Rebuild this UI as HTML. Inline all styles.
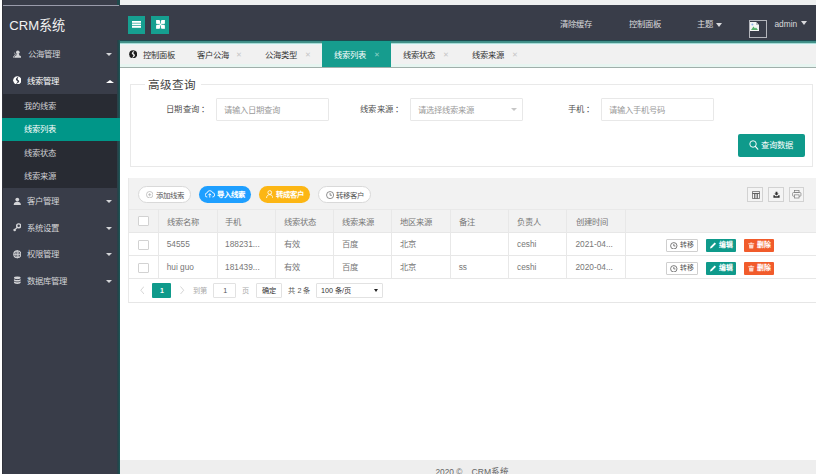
<!DOCTYPE html>
<html lang="zh-CN">
<head>
<meta charset="utf-8">
<title>CRM系统</title>
<style>
*{box-sizing:border-box;margin:0;padding:0}
html{width:816px;height:474px;overflow:hidden;background:#fff}
body{width:816px;height:474px;background:#fff}
body{position:relative;font-family:"Liberation Sans",sans-serif;font-size:8.4px;color:#555;line-height:1}
.abs{position:absolute}
/* ---------- sidebar ---------- */
#side{position:absolute;left:2px;top:0;width:118px;height:474px;background:#393d49;box-shadow:0 -4px 0 #393d49,0 4px 0 #393d49}
#side .edge{position:absolute;right:0;top:40px;width:3px;height:434px;background:linear-gradient(to right,#2e3d47,#21494d,#1c5a58);z-index:1}
#side .edge2{position:absolute;right:0;top:0;width:3px;height:5px;background:#1f4a4c}
#side .ledge{position:absolute;left:0;top:0;width:1px;height:474px;background:#30323b}
#side .topline{position:absolute;left:0;top:5px;width:117px;height:1px;background:#9a9cab}
#logo{position:absolute;left:7.3px;top:18.6px;font-size:13.1px;color:#f2f2f2;white-space:nowrap}
.nav{position:absolute;left:0;width:118px;height:26.5px;color:#d4d5d8}
.nav .ic{position:absolute;left:10.6px;top:8.6px;width:8.6px;height:8.6px}
.nav .tx{position:absolute;left:25.2px;top:9.1px;font-size:8.35px;white-space:nowrap}
.nav .ar{position:absolute;left:104px;top:12px;width:0;height:0;border-left:3.2px solid transparent;border-right:3.2px solid transparent;border-top:3.6px solid #d4d5d8}
.nav .ar.up{border-top:none;border-bottom:3.9px solid #fff;border-left-width:4.1px;border-right-width:4.1px;left:103.6px;top:12.3px}
#child{position:absolute;left:0;top:94px;width:118px;height:94.4px;background:#282b33}
.sub{position:absolute;left:0;width:118px;height:23.6px;color:#cfd0d3}
.sub span{position:absolute;left:22px;top:7.6px;font-size:8.3px;white-space:nowrap}
.sub.on{background:#009688;color:#fff;z-index:2}
/* ---------- header ---------- */
#topstrip{position:absolute;left:120px;top:0;width:696px;height:5px;background:#eef0f0;box-shadow:0 -4px 0 #eef0f0,4px 0 0 #eef0f0,4px -4px 0 #eef0f0}
#header{position:absolute;left:120px;top:5px;width:696px;height:36px;background:#393d49;box-shadow:4px 0 0 #393d49}
#tealline{position:absolute;left:120px;top:40px;width:696px;height:3px;background:linear-gradient(#1d4b50 0,#1d4b50 1px,#3f8d87 1px,#3f8d87 2px,#449189 2px,#449189 3px)}
.hbtn{position:absolute;top:11px;width:17.5px;height:18px;background:#169f90}
.hlink{position:absolute;top:15.4px;font-size:8.4px;color:#d9dadd;white-space:nowrap}
.caret{position:absolute;width:0;height:0;border-left:3.7px solid transparent;border-right:3.7px solid transparent;border-top:4px solid #d9dadd}
/* ---------- tabs ---------- */
#tabs{position:absolute;left:120px;top:43px;width:696px;height:25px;background:linear-gradient(#a9ddd8 0,#a9ddd8 1px,#e9f6f9 1px,#e9f6f9 2px,#f1f1f1 2px,#f1f1f1 21px,#e7f5f1 21px,#e7f5f1 24px);border-bottom:1px solid #a0afaa}
.tab{position:absolute;top:0;height:24px;font-size:8.3px;color:#333;white-space:nowrap}
.tab .t{position:absolute;top:7.8px}
.tab .x{position:absolute;top:8.4px;font-size:7px;color:#c6c6c6}
.tab.on{background:#169c8e;color:#fff}
.tab.on .x{color:#8fd0c8}
/* ---------- search ---------- */
#fs{position:absolute;left:130px;top:84px;width:683px;height:82.5px;border:1px solid #e9e9e9}
#legend{position:absolute;left:144.5px;top:77px;width:56px;height:15px;background:#fff;font-size:11.6px;color:#444;padding:1.9px 0 0 3.6px;white-space:nowrap}
.lbl i{font-style:normal;margin-left:1.5px}
.lbl{position:absolute;top:105px;font-size:8.3px;color:#505050;white-space:nowrap;letter-spacing:0.45px}
.inp{position:absolute;top:98px;width:112.5px;height:22.6px;border:1px solid #e8e8e8;border-radius:1px;background:#fff;font-size:8.3px;color:#9a9a9a;padding:7.2px 0 0 6.5px;white-space:nowrap}
#qbtn{position:absolute;left:738px;top:134px;width:67px;height:22.6px;background:#0f9a8b;border-radius:2px;color:#fff;font-size:8.3px}
/* ---------- table ---------- */
#tbl{position:absolute;left:128px;top:178px;width:688px;height:125px;background:#fff;border-left:1px solid #e9e9e9;border-bottom:1px solid #e6e6e6}
#tool{position:absolute;left:0;top:0;width:688px;height:31px;background:#f2f2f2}
.pill{position:absolute;top:8px;height:17.4px;border-radius:8.7px;font-size:7.4px;white-space:nowrap;color:#fff}
.pill.w{background:#fff;border:1px solid #d9d9d9;color:#555}
.pill span{position:absolute;top:4.8px}
.tic{position:absolute;top:8.8px;width:15.4px;height:15px;border:1px solid #d2d2d2;background:#f4f4f4}
#thead{position:absolute;left:0;top:31px;width:688px;height:24px;background:#f2f2f2;border-bottom:1px solid #e7e7e7;border-top:1px solid #e9e9e9}
.row{position:absolute;left:0;width:688px;height:23px;border-bottom:1px solid #e7e7e7;border-right:1px solid #e9e9e9;background:#fff}
.c{position:absolute;top:7.4px;font-size:8.3px;color:#777;white-space:nowrap}
#thead .c{color:#777;top:7.5px}
#thead .cb{top:5.6px}
.v{position:absolute;top:31px;width:1px;height:70px;background:#e8e8e8}
.cb{position:absolute;left:9.2px;top:6.6px;width:10.6px;height:10.6px;border:1px solid #d2d2d2;border-radius:1px;background:#fff}
.ob{position:absolute;top:6px;height:13.2px;font-size:6.9px;border-radius:1px;color:#fff;white-space:nowrap}
.ob span{position:absolute;top:3.3px}
.ob.w{background:#fff;border:1px solid #cfcfcf;color:#555}
.ob.g{background:#0f9a8b}
.ob.r{background:#f15b2b}
/* ---------- pager ---------- */
.pg{position:absolute;font-size:7.2px;color:#555;white-space:nowrap}
.pbox{position:absolute;top:104.6px;height:15.4px;border:1px solid #e2e2e2;background:#fff;border-radius:1px}
/* ---------- footer ---------- */
#foot{position:absolute;left:120px;top:460px;width:696px;height:14px;background:#eeeeee;box-shadow:0 4px 0 #eee,4px 0 0 #eee,4px 4px 0 #eee}
#foot span{position:absolute;top:8.1px;font-size:8.3px;color:#666;white-space:pre}
</style>
</head>
<body>

<!-- ================= SIDEBAR ================= -->
<div id="side">
  <div class="topline"></div>
  <div id="logo">CRM系统</div>

  <div class="nav" style="top:41px">
    <svg class="ic" viewBox="0 0 10 10"><circle cx="5.6" cy="2.600" r="2.100" fill="#d4d5d8"/><path d="M4.300 4.200h2.600l.5 2.300c1.500.3 2.300 1 2.300 2.600H1.500c0-1.600.8-2.300 2.300-2.600z" fill="#d4d5d8"/><path d="M.3 9.100c0-1.500.6-2.300 1.900-2.700l.6-1.600c-.6-.4-.9-1-.9-1.700" fill="none" stroke="#d4d5d8" stroke-width=".9"/></svg>
    <span class="tx" style="left:25.800px">公海管理</span><i class="ar"></i>
  </div>
  <div class="nav" style="top:67.5px;color:#fff">
    <svg class="ic" style="top:8.300px" viewBox="0 0 10 10"><circle cx="5" cy="5" r="4.800" fill="#fff"/><path d="M6.700 .700C4.800 1.500 3 3 3.400 4.300c.3 1 2 1 1.900 2.200-.1 1-1.200 2-2.200 2.700 1.900-.2 3.900-1.500 4.100-3 .2-1.400-1.700-1.500-1.800-2.500-.1-1 .7-2.200 1.300-3z" fill="#393d49"/></svg>
    <span class="tx" style="left:24.600px;top:9px">线索管理</span><i class="ar up"></i>
  </div>
  <div id="child">
    <div class="sub" style="top:0"><span>我的线索</span></div>
    <div class="sub on" style="top:23.6px"><span>线索列表</span></div>
    <div class="sub" style="top:47.2px"><span>线索状态</span></div>
    <div class="sub" style="top:70.8px"><span>线索来源</span></div>
  </div>
  <div class="nav" style="top:188.4px">
    <svg class="ic" viewBox="0 0 10 10"><circle cx="5" cy="3" r="2.200" fill="#d4d5d8"/><path d="M0.8 9.300c0-2.800 1.800-3.800 4.200-3.800s4.200 1 4.200 3.800z" fill="#d4d5d8"/></svg>
    <span class="tx">客户管理</span><i class="ar"></i>
  </div>
  <div class="nav" style="top:214.9px">
    <svg class="ic" viewBox="0 0 10 10"><circle cx="6.600" cy="3.300" r="2.300" fill="none" stroke="#d4d5d8" stroke-width="1.700"/><path d="M4.700 5.300L2.600 7.400" stroke="#d4d5d8" stroke-width="1.500"/><circle cx="1.900" cy="8.100" r="1.500" fill="#d4d5d8"/></svg>
    <span class="tx">系统设置</span><i class="ar"></i>
  </div>
  <div class="nav" style="top:241.400px">
    <svg class="ic" viewBox="0 0 10 10"><circle cx="5" cy="5" r="4.1" fill="none" stroke="#d4d5d8" stroke-width="1.200"/><path d="M5 .9v8.200M.9 5h8.200" stroke="#d4d5d8" stroke-width="1.100"/><ellipse cx="5" cy="5" rx="1.900" ry="4.100" fill="none" stroke="#d4d5d8" stroke-width=".9"/></svg>
    <span class="tx">权限管理</span><i class="ar"></i>
  </div>
  <div class="nav" style="top:267.9px">
    <svg class="ic" viewBox="0 0 10 10"><ellipse cx="5" cy="2.100" rx="3.900" ry="1.600" fill="#d4d5d8"/><path d="M1.100 3.400c.6.800 2.200 1.200 3.900 1.200s3.300-.4 3.900-1.200v1.500c0 .9-1.700 1.600-3.900 1.600S1.100 5.800 1.100 4.900zM1.100 6.200c.6.800 2.200 1.200 3.900 1.200s3.300-.4 3.900-1.200v1.500c0 .9-1.700 1.600-3.900 1.600S1.100 8.600 1.100 7.700z" fill="#d4d5d8"/></svg>
    <span class="tx">数据库管理</span><i class="ar"></i>
  </div>

  <div class="ledge"></div>
  <div class="edge"></div><div class="edge2"></div>
</div>

<!-- ================= HEADER ================= -->
<div id="topstrip"></div>
<div id="header">
  <div class="hbtn" style="left:8px;width:17px">
    <svg class="abs" style="left:4px;top:4.800px" width="9" height="6.800" viewBox="0 0 9 6.800"><rect x="0" y="0" width="9" height="1.800" fill="#fff"/><rect x="0" y="2.500" width="9" height="1.800" fill="#fff"/><rect x="0" y="5" width="9" height="1.800" fill="#fff"/></svg>
  </div>
  <div class="hbtn" style="left:31px;width:18px">
    <svg class="abs" style="left:4.500px;top:3.800px" width="9" height="8.800" viewBox="0 0 9 9"><rect x="0" y="0" width="9" height="9" fill="#fff"/><path d="M4.500 0v9M0 4.500h9" stroke="#169f90" stroke-width=".8"/><path d="M3.300 0h2.400L4.500 1.600zM3.300 9h2.400L4.500 7.400zM0 3.500v2L1.300 4.500zM9 3.500v2L7.700 4.500z" fill="#169f90"/><circle cx="4.500" cy="4.500" r="1" fill="#fff"/></svg>
  </div>
  <span class="hlink" style="left:439.500px">清除缓存</span>
  <span class="hlink" style="left:508.500px">控制面板</span>
  <span class="hlink" style="left:576.500px">主题</span>
  <i class="caret" style="left:596.200px;top:17.800px"></i>
  <div class="abs" style="left:628.700px;top:15.300px;width:18px;height:17.700px;border:1px solid #b4b6bc">
    <svg class="abs" style="left:0.500px;top:0.500px" width="9" height="9" viewBox="0 0 9 9"><path d="M0 0h6l3 3v6H0z" fill="#f4f6f4"/><path d="M6 0v3h3z" fill="#b9bdc0"/><path d="M1 8l2.500-3.500L5 6.500 6 5.500 8 8z" fill="#56b36a"/><circle cx="2.400" cy="2.600" r="1" fill="#8fb4e8"/></svg>
  </div>
  <span class="hlink" style="left:654.400px">admin</span>
  <i class="caret" style="left:681.300px;top:16px"></i>
</div>
<div id="tealline"></div>

<!-- ================= TABS ================= -->
<div id="tabs">
  <div class="tab" style="left:0;width:65px">
    <svg class="abs" style="left:8.900px;top:6.800px" width="8.300" height="8.600" viewBox="0 0 10 10"><circle cx="5" cy="5" r="4.800" fill="#1e1e1e"/><path d="M6.700 .700C4.800 1.500 3 3 3.400 4.300c.3 1 2 1 1.900 2.200-.1 1-1.200 2-2.200 2.700 1.900-.2 3.900-1.500 4.100-3 .2-1.400-1.700-1.500-1.800-2.500-.1-1 .7-2.200 1.300-3z" fill="#f1f1f1"/></svg>
    <span class="t" style="left:22.700px">控制面板</span>
  </div>
  <div class="tab" style="left:65px;width:69px"><span class="t" style="left:11.700px">客户公海</span><span class="x" style="left:50.600px">✕</span></div>
  <div class="tab" style="left:134px;width:68.500px"><span class="t" style="left:11.400px">公海类型</span><span class="x" style="left:50.500px">✕</span></div>
  <div class="tab on" style="left:201.800px;top:-2px;height:26px;width:69.200px"><span class="t" style="left:11.900px;top:9.800px">线索列表</span><span class="x" style="left:52px;top:10.400px">✕</span></div>
  <div class="tab" style="left:271.200px;width:69px"><span class="t" style="left:11.800px">线索状态</span><span class="x" style="left:51.800px">✕</span></div>
  <div class="tab" style="left:340.200px;width:69px"><span class="t" style="left:11.800px">线索来源</span><span class="x" style="left:51.800px">✕</span></div>
</div>

<!-- ================= SEARCH ================= -->
<div id="fs"></div>
<div id="legend">高级查询</div>
<span class="lbl" style="left:165.800px">日期查询<i>：</i></span>
<div class="inp" style="left:216px">请输入日期查询</div>
<span class="lbl" style="left:360px">线索来源<i>：</i></span>
<div class="inp" style="left:410.400px">请选择线索来源<i class="caret" style="left:99.500px;top:9px;border-top-color:#c6c6c6;border-left-width:3.300px;border-right-width:3.300px;border-top-width:3.600px"></i></div>
<span class="lbl" style="left:568px">手机<i>：</i></span>
<div class="inp" style="left:601px">请输入手机号码</div>
<div id="qbtn">
  <svg class="abs" style="left:11px;top:6.400px" width="9.600" height="10" viewBox="0 0 10 10.500"><circle cx="4.200" cy="4.200" r="3.400" fill="none" stroke="#fff" stroke-width="1"/><path d="M6.600 6.800l2.600 2.900" stroke="#fff" stroke-width="1.200" stroke-linecap="round"/></svg>
  <span class="abs" style="left:23px;top:7.400px;white-space:nowrap">查询数据</span>
</div>

<!-- ================= TABLE ================= -->
<div id="tbl">
  <div id="tool">
    <div class="pill w" style="left:8.500px;width:53.500px">
      <svg class="abs" style="left:7.300px;top:3.900px" width="7.400" height="7.400" viewBox="0 0 8 8"><circle cx="4" cy="4" r="3.500" fill="none" stroke="#aaa" stroke-width=".7"/><path d="M4 2.300v3.400M2.300 4h3.400" stroke="#aaa" stroke-width=".7"/></svg>
      <span style="left:17.200px">添加线索</span></div>
    <div class="pill" style="left:70px;width:51.600px;background:#1e9fff">
      <svg class="abs" style="left:6px;top:4.400px" width="9.500" height="8" viewBox="0 0 9.500 8"><path d="M2.300 7a2 2 0 0 1-.3-4A2.900 2.900 0 0 1 7.600 2.700 2.150 2.150 0 0 1 7.400 7" fill="none" stroke="#fff" stroke-width=".9"/><path d="M4.800 7.600V3.800M3.400 5.200l1.400-1.500 1.400 1.500" fill="none" stroke="#fff" stroke-width=".9"/></svg>
      <span style="left:17.600px;font-weight:bold">导入线索</span></div>
    <div class="pill" style="left:129.600px;width:51.400px;background:#fcb614">
      <svg class="abs" style="left:7.300px;top:4.300px" width="7.500" height="8.400" viewBox="0 0 8 9"><circle cx="4" cy="2.700" r="2" fill="none" stroke="#fff" stroke-width=".9"/><path d="M.6 8.600c0-2.300 1.400-3.600 3.400-3.600s3.400 1.300 3.400 3.600" fill="none" stroke="#fff" stroke-width=".9"/></svg>
      <span style="left:17.200px;font-weight:bold">转成客户</span></div>
    <div class="pill w" style="left:189.300px;width:52.800px">
      <svg class="abs" style="left:7px;top:4px" width="8.200" height="8.200" viewBox="0 0 9 9"><circle cx="4.500" cy="4.500" r="3.900" fill="none" stroke="#666" stroke-width=".8"/><path d="M4.500 2.200v2.500h2" fill="none" stroke="#666" stroke-width=".8"/></svg>
      <span style="left:17px">转移客户</span></div>

    <div class="tic" style="left:618.300px"><svg class="abs" style="left:3.400px;top:3.200px" width="8" height="8" viewBox="0 0 9 9"><path d="M.5.500h8v2.300h-8zM.5 2.800h2.600v5.700H.5zM3.100 2.800h2.800v5.700H3.100zM5.900 2.800h2.600v5.700H5.900z" fill="none" stroke="#555" stroke-width=".8"/></svg></div>
    <div class="tic" style="left:639.300px"><svg class="abs" style="left:3.600px;top:3.600px" width="7" height="7.200" viewBox="0 0 9 9"><path d="M3.300.8h2.400v2.400h1.600L4.500 5.600 1.700 3.200h1.600z" fill="#333"/><path d="M.5 5.500h1.600l.9 1h3l.9-1h1.600v3h-8z" fill="#333"/></svg></div>
    <div class="tic" style="left:660px"><svg class="abs" style="left:2.200px;top:2.400px" width="9.500" height="8.800" viewBox="0 0 10 9"><rect x="2.600" y=".5" width="4.800" height="2" fill="none" stroke="#777" stroke-width=".7"/><rect x=".6" y="2.500" width="8.800" height="4" rx="1" fill="none" stroke="#777" stroke-width=".7"/><rect x="2.600" y="5" width="4.800" height="3.300" fill="#f7f7f7" stroke="#777" stroke-width=".7"/></svg></div>
  </div>

  <div id="thead">
    <div class="cb"></div>
    <span class="c" style="left:37.7px">线索名称</span>
    <span class="c" style="left:96.1px">手机</span>
    <span class="c" style="left:154.5px">线索状态</span>
    <span class="c" style="left:212.9px">线索来源</span>
    <span class="c" style="left:271.3px">地区来源</span>
    <span class="c" style="left:329.7px">备注</span>
    <span class="c" style="left:388.1px">负责人</span>
    <span class="c" style="left:446.5px">创建时间</span>
  </div>
  <div class="row" style="top:55px">
    <div class="cb"></div>
    <span class="c" style="left:37.7px">54555</span>
    <span class="c" style="left:96.1px">188231...</span>
    <span class="c" style="left:154.5px">有效</span>
    <span class="c" style="left:212.9px">百度</span>
    <span class="c" style="left:271.3px">北京</span>
    <span class="c" style="left:388.1px">ceshi</span>
    <span class="c" style="left:446.5px">2021-04...</span>
    <div class="ob w" style="left:537px;width:31.600px"><svg class="abs" style="left:3.300px;top:1.700px" width="7.600" height="7.600" viewBox="0 0 9 9"><circle cx="4.500" cy="4.500" r="3.800" fill="none" stroke="#555" stroke-width=".9"/><path d="M4.500 2.300v2.400h1.900" fill="none" stroke="#555" stroke-width=".9"/></svg><span style="left:12.600px;top:2.300px">转移</span></div>
    <div class="ob g" style="left:577px;width:30.200px"><svg class="abs" style="left:4px;top:3.300px" width="6.500" height="6.500" viewBox="0 0 7 7"><path d="M0 7l.5-2L5 .5 6.500 2 2 6.500z" fill="#fff"/></svg><span style="left:12.500px;font-weight:bold">编辑</span></div>
    <div class="ob r" style="left:615px;width:30.200px"><svg class="abs" style="left:4px;top:3.200px" width="6.500" height="6.800" viewBox="0 0 7 7"><path d="M.3 1.300h6.400v1H.3zM2.500.3h2v1h-2zM1 2.800h5l-.4 4H1.400z" fill="#ffd9cc"/></svg><span style="left:12.500px;font-weight:bold">删除</span></div>
  </div>
  <div class="row" style="top:78px">
    <div class="cb"></div>
    <span class="c" style="left:37.7px">hui guo</span>
    <span class="c" style="left:96.1px">181439...</span>
    <span class="c" style="left:154.5px">有效</span>
    <span class="c" style="left:212.9px">百度</span>
    <span class="c" style="left:271.3px">北京</span>
    <span class="c" style="left:329.7px">ss</span>
    <span class="c" style="left:388.1px">ceshi</span>
    <span class="c" style="left:446.5px">2020-04...</span>
    <div class="ob w" style="left:537px;width:31.600px"><svg class="abs" style="left:3.300px;top:1.700px" width="7.600" height="7.600" viewBox="0 0 9 9"><circle cx="4.500" cy="4.500" r="3.800" fill="none" stroke="#555" stroke-width=".9"/><path d="M4.500 2.300v2.400h1.900" fill="none" stroke="#555" stroke-width=".9"/></svg><span style="left:12.600px;top:2.300px">转移</span></div>
    <div class="ob g" style="left:577px;width:30.200px"><svg class="abs" style="left:4px;top:3.300px" width="6.500" height="6.500" viewBox="0 0 7 7"><path d="M0 7l.5-2L5 .5 6.500 2 2 6.500z" fill="#fff"/></svg><span style="left:12.500px;font-weight:bold">编辑</span></div>
    <div class="ob r" style="left:615px;width:30.200px"><svg class="abs" style="left:4px;top:3.200px" width="6.500" height="6.800" viewBox="0 0 7 7"><path d="M.3 1.300h6.400v1H.3zM2.500.3h2v1h-2zM1 2.800h5l-.4 4H1.400z" fill="#ffd9cc"/></svg><span style="left:12.500px;font-weight:bold">删除</span></div>
  </div>

  <!-- column separators -->
  <i class="v" style="left:29.4px"></i><i class="v" style="left:87.8px"></i><i class="v" style="left:146.2px"></i><i class="v" style="left:204.4px"></i><i class="v" style="left:262.4px"></i><i class="v" style="left:321.4px"></i><i class="v" style="left:379.4px"></i><i class="v" style="left:437.4px"></i><i class="v" style="left:496px"></i>

  <!-- pager -->
  <svg class="abs" style="left:10.600px;top:108.300px" width="4.500" height="8.500" viewBox="0 0 4.500 8.500"><path d="M4 .5L.8 4.250 4 8" fill="none" stroke="#d0d0d0" stroke-width=".9"/></svg>
  <div class="abs" style="left:23.300px;top:105px;width:19px;height:15px;background:#0f9a8b;border-radius:1px"></div>
  <span class="pg" style="left:31px;top:108.800px;color:#fff;font-weight:bold;font-size:7px">1</span>
  <svg class="abs" style="left:51px;top:108.300px" width="4.500" height="8.500" viewBox="0 0 4.500 8.500"><path d="M.5 .5L3.700 4.250 .5 8" fill="none" stroke="#d0d0d0" stroke-width=".9"/></svg>
  <span class="pg" style="left:64px;top:108.600px;color:#aaa">到第</span>
  <div class="pbox" style="left:84.400px;width:23px"></div>
  <span class="pg" style="left:94.300px;top:108.800px">1</span>
  <span class="pg" style="left:112.800px;top:108.600px;color:#aaa">页</span>
  <div class="pbox" style="left:126.700px;width:26.600px"></div>
  <span class="pg" style="left:133.100px;top:108.600px;color:#333">确定</span>
  <span class="pg" style="left:159.400px;top:108.600px">共 2 条</span>
  <div class="pbox" style="left:186.500px;width:67px"></div>
  <span class="pg" style="left:192px;top:108.800px;color:#333">100 条/页</span>
  <i class="caret" style="left:244.500px;top:110.800px;border-top-color:#222;border-left-width:2px;border-right-width:2px;border-top-width:3px"></i>
</div>

<!-- ================= FOOTER ================= -->
<div id="foot"><span style="left:315.500px">2020 ©</span><span style="left:351.500px;font-size:8.600px">CRM系统</span></div>

</body>
</html>
